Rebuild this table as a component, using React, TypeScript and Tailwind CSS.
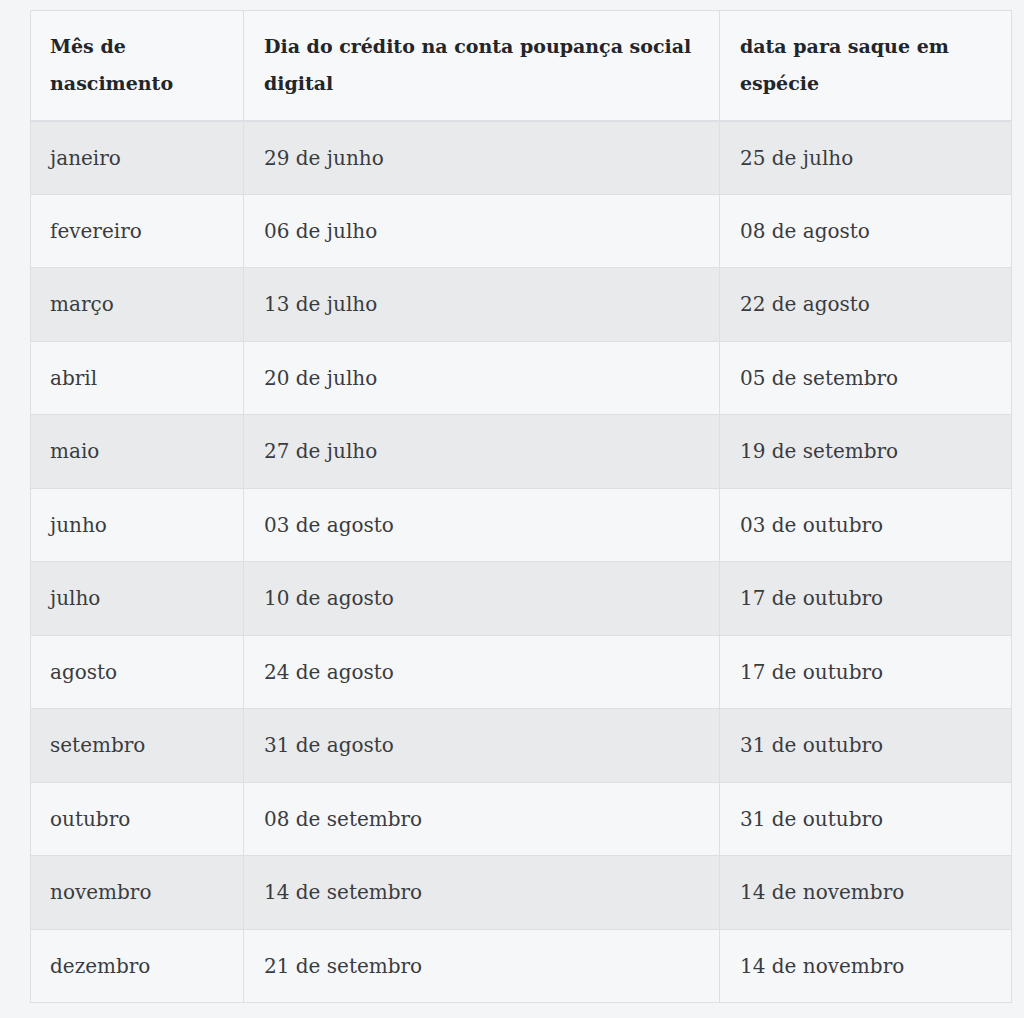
import React from "react";

const rows: [string, string, string][] = [
  ["janeiro", "29 de junho", "25 de julho"],
  ["fevereiro", "06 de julho", "08 de agosto"],
  ["março", "13 de julho", "22 de agosto"],
  ["abril", "20 de julho", "05 de setembro"],
  ["maio", "27 de julho", "19 de setembro"],
  ["junho", "03 de agosto", "03 de outubro"],
  ["julho", "10 de agosto", "17 de outubro"],
  ["agosto", "24 de agosto", "17 de outubro"],
  ["setembro", "31 de agosto", "31 de outubro"],
  ["outubro", "08 de setembro", "31 de outubro"],
  ["novembro", "14 de setembro", "14 de novembro"],
  ["dezembro", "21 de setembro", "14 de novembro"],
];

export default function App() {
  return (
    <div className="min-h-[1018px] w-[1024px] bg-[#f4f5f7] pt-[10px] pl-[30px] font-['DejaVu_Serif',serif]">
      <table className="w-[981px] table-fixed border-collapse border border-[#dcdfe3]">
        <colgroup>
          <col className="w-[213px]" />
          <col className="w-[476px]" />
          <col className="w-[292px]" />
        </colgroup>
        <thead>
          <tr className="h-[110px] border-b-2 border-[#dcdfe3] bg-[#f7f8fa] text-left align-top">
            <th className="border-r border-[#dcdfe3] px-[19px] pt-[17px] text-[19px] leading-[37px] font-bold text-[#22262a]">
              Mês de nascimento
            </th>
            <th className="border-r border-[#dcdfe3] px-[20px] pt-[17px] text-[19px] leading-[37px] font-bold text-[#22262a]">
              Dia do crédito na conta poupança social digital
            </th>
            <th className="px-[20px] pt-[17px] text-[19px] leading-[37px] font-bold text-[#22262a]">
              data para saque em espécie
            </th>
          </tr>
        </thead>
        <tbody>
          {rows.map((r, i) => (
            <tr
              key={r[0]}
              className={`h-[73.5px] border-t border-[#dcdfe3] text-[20px] text-[#3a3c3f] ${
                i % 2 === 0 ? "bg-[#e9eaec]" : "bg-[#f6f7f9]"
              }`}
            >
              <td className="border-r border-[#dcdfe3] px-[19px]">{r[0]}</td>
              <td className="border-r border-[#dcdfe3] px-[20px]">{r[1]}</td>
              <td className="px-[20px]">{r[2]}</td>
            </tr>
          ))}
        </tbody>
      </table>
    </div>
  );
}
